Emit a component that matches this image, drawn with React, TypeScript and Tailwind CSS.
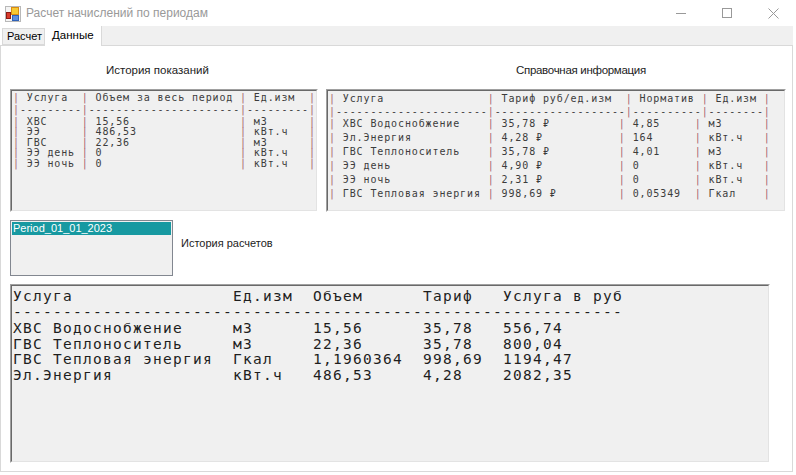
import React from "react";

const ui = "font-['Liberation_Sans','Noto_Sans',sans-serif]";
const mono = "font-['DejaVu_Sans_Mono','Liberation_Mono',monospace] whitespace-pre";

const pad = (s: string, n: number) => s.padEnd(n, " ");

const readings = [
  ["ХВС", "15,56", "м3"],
  ["ЭЭ", "486,53", "кВт.ч"],
  ["ГВС", "22,36", "м3"],
  ["ЭЭ день", "0", "кВт.ч"],
  ["ЭЭ ночь", "0", "кВт.ч"],
];

const tariffs = [
  ["ХВС Водоснобжение", "35,78 ₽", "4,85", "м3"],
  ["Эл.Энергия", "4,28 ₽", "164", "кВт.ч"],
  ["ГВС Теплоноситель", "35,78 ₽", "4,01", "м3"],
  ["ЭЭ день", "4,90 ₽", "0", "кВт.ч"],
  ["ЭЭ ночь", "2,31 ₽", "0", "кВт.ч"],
  ["ГВС Тепловая энергия", "998,69 ₽", "0,05349", "Гкал"],
];

const calc = [
  ["ХВС Водоснобжение", "м3", "15,56", "35,78", "556,74"],
  ["ГВС Теплоноситель", "м3", "22,36", "35,78", "800,04"],
  ["ГВС Тепловая энергия", "Гкал", "1,1960364", "998,69", "1194,47"],
  ["Эл.Энергия", "кВт.ч", "486,53", "4,28", "2082,35"],
];

function Piped({ line }: { line: string }) {
  const parts = line.split("|");
  return (
    <>
      {parts.map((p, i) => (
        <React.Fragment key={i}>
          {i > 0 && <span className="text-[#a8606c]">|</span>}
          {p}
        </React.Fragment>
      ))}
    </>
  );
}

function Sunken({ className, children }: { className: string; children?: React.ReactNode }) {
  return (
    <div className={"border border-t-[#a0a0a0] border-l-[#a0a0a0] border-b-white border-r-white " + className}>
      <div className="h-full border border-t-[#696969] border-l-[#696969] border-b-[#e3e3e3] border-r-[#e3e3e3] bg-[#f0f0f0] overflow-hidden">
        {children}
      </div>
    </div>
  );
}

function AppIcon() {
  return (
    <svg width="16" height="16" viewBox="0 0 16 16">
      <rect x="0.5" y="0.5" width="15" height="15" fill="#f4f4f4" stroke="#b8b8b8" />
      <rect x="6.5" y="1.5" width="7" height="7" fill="#f7c933" stroke="#d98c12" />
      <rect x="7.5" y="9.5" width="6" height="5" fill="#5d8fe0" stroke="#2f62b8" />
      <rect x="1.5" y="6.5" width="4" height="6" fill="#d83a2a" stroke="#8e1a12" />
    </svg>
  );
}

export default function App() {
  const b1Head = "| " + pad("Услуга", 8) + "| " + pad("Объем за весь период", 21) + "| " + pad("Ед.изм", 8) + "|";
  const b1Dash = "|" + "-".repeat(9) + "|" + "-".repeat(22) + "|" + "-".repeat(9) + "|";
  const b2Head =
    "| " + pad("Услуга", 21) + "| " + pad("Тариф руб/ед.изм", 18) + "| " + pad("Норматив", 9) + "| " + pad("Ед.изм", 7) + "|";
  const b2Dash = "|" + "-".repeat(22) + "|" + "-".repeat(19) + "|" + "-".repeat(10) + "|" + "-".repeat(8) + "|";
  const b3Head = pad("Услуга", 22) + pad("Ед.изм", 8) + pad("Объем", 11) + pad("Тариф", 8) + "Услуга в руб";

  return (
    <div className={"w-[796px] h-[475px] bg-white flex flex-col overflow-hidden " + ui}>
      {/* title bar */}
      <div className="h-[26px] flex items-center shrink-0">
        <div className="ml-[5px] mt-[1px]">
          <AppIcon />
        </div>
        <div className="ml-[5px] text-[12px] text-[#999999]">Расчет начислений по периодам</div>
        <div className="ml-auto flex h-full">
          <div className="w-[46px] flex items-center justify-center">
            <svg width="10" height="10" viewBox="0 0 10 10">
              <path d="M0 5.5H10" stroke="#999" strokeWidth="1" />
            </svg>
          </div>
          <div className="w-[46px] flex items-center justify-center">
            <svg width="10" height="10" viewBox="0 0 10 10">
              <rect x="0.5" y="0.5" width="9" height="9" fill="none" stroke="#999" />
            </svg>
          </div>
          <div className="w-[46px] flex items-center justify-center">
            <svg width="11" height="11" viewBox="0 0 11 11">
              <path d="M0.5 0.5L10.5 10.5M10.5 0.5L0.5 10.5" stroke="#999" strokeWidth="1" />
            </svg>
          </div>
        </div>
      </div>

      {/* tabs */}
      <div className="h-[19px] flex items-end shrink-0 text-[11.5px] text-black">
        <div className="w-[2px]" />
        <div className="h-[17px] w-[43px] border border-[#d9d9d9] bg-[#f0f0f0] flex items-center pl-[4px] text-[11px] leading-none">
          Расчет
        </div>
        <div className="relative z-10 -mb-px h-[20px] w-[56px] bg-white flex items-center pl-[7px] leading-none">
          Данные
        </div>
        <div className="h-[19px] w-[692px] bg-[#f0f0f0] border-l border-[#d9d9d9]" />
      </div>

      {/* tab page */}
      <div className="w-[793px] h-[427px] border border-[#d9d9d9] shrink-0">
        <div className="flex gap-[8px] pl-[9px] pt-[16px]">
          <div className="w-[308px] flex flex-col">
            <div className="h-[16px] leading-[16px] pl-[96px] text-[11.5px] text-[#222]">История показаний</div>
            <Sunken className="mt-[11px] h-[123px]">
              <div className={mono + " pl-[1px] pt-[1px] text-[10px] tracking-[0.86px] text-[#3c3c3c]"}>
                <div className="h-[12px] leading-[12px]">
                  <Piped line={b1Head} />
                </div>
                <div className="h-[12.5px] leading-[12.5px]">
                  <Piped line={b1Dash} />
                </div>
                {readings.map((r, i) => (
                  <div key={i} className="h-[10.66px] leading-[10.66px]">
                    <Piped line={"| " + pad(r[0], 8) + "| " + pad(r[1], 21) + "| " + pad(r[2], 8) + "|"} />
                  </div>
                ))}
              </div>
            </Sunken>
          </div>
          <div className="w-[460px] flex flex-col">
            <div className="h-[16px] leading-[16px] pl-[190px] text-[11.5px] tracking-[-0.3px] text-[#222]">
              Справочная информация
            </div>
            <Sunken className="mt-[11px] h-[123px]">
              <div className={mono + " pl-[1px] pt-[1px] text-[10px] tracking-[0.88px] text-[#3c3c3c]"}>
                <div className="h-[14px] leading-[14px]">
                  <Piped line={b2Head} />
                </div>
                <div className="h-[11px] leading-[11px]">
                  <Piped line={b2Dash} />
                </div>
                {tariffs.map((r, i) => (
                  <div key={i} className="h-[14.1px] leading-[14.1px]">
                    <Piped
                      line={"| " + pad(r[0], 21) + "| " + pad(r[1], 17) + "| " + pad(r[2], 9) + "| " + pad(r[3], 8) + "|"}
                    />
                  </div>
                ))}
              </div>
            </Sunken>
          </div>
        </div>

        <div className="flex pl-[9px] mt-[8px]">
          <div className="w-[163px] h-[56px] border border-[#828790] bg-[#f0f0f0] p-[1px]">
            <div className="h-[13px] bg-[#1799a1] text-white text-[11px] leading-[13px] pl-[1px]">Period_01_01_2023</div>
          </div>
          <div className="ml-[8px] mt-[15px] h-[16px] leading-[16px] text-[11px] text-[#222]">История расчетов</div>
        </div>

        <Sunken className="ml-[9px] mt-[8px] w-[760px] h-[179px]">
          <div className={mono + " pl-[1px] pt-[2px] text-[14.5px] tracking-[1.27px] text-[#1e1e1e]"}>
            <div className="h-[16px] leading-[16px]">{b3Head}</div>
            <div className="h-[17px] leading-[17px]">{"-".repeat(61)}</div>
            {calc.map((r, i) => (
              <div key={i} className="h-[15.5px] leading-[15.5px]">
                {pad(r[0], 22) + pad(r[1], 8) + pad(r[2], 11) + pad(r[3], 8) + r[4]}
              </div>
            ))}
          </div>
        </Sunken>
      </div>
    </div>
  );
}
